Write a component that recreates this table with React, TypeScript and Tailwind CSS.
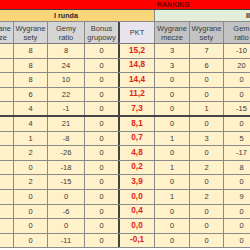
import React from "react";

const W = ["w-[35px]", "w-[34px]", "w-[37px]", "w-[35px]", "w-[35px]", "w-[35px]", "w-[34px]", "w-[36px]"];

const rows: (string | number)[][] = [
  ["", 8, 8, 0, "15,2", 3, 7, -10],
  ["", 8, 24, 0, "14,8", 3, 6, 20],
  ["", 8, 10, 0, "14,4", 0, 0, 0],
  ["", 6, 22, 0, "11,2", 0, 0, 0],
  ["", 4, -1, 0, "7,3", 0, 1, -15],
  ["", 4, 21, 0, "8,1", 0, 0, 0],
  ["", 1, -8, 0, "0,7", 1, 3, 5],
  ["", 2, -26, 0, "4,8", 0, 0, -17],
  ["", 0, -18, 0, "0,2", 1, 2, 8],
  ["", 2, -15, 0, "3,9", 0, 0, 0],
  ["", 0, 0, 0, "0,0", 1, 2, 9],
  ["", 0, -6, 0, "0,4", 0, 0, 0],
  ["", 0, 0, 0, "0,0", 0, 0, 0],
  ["", 0, -11, 0, "-0,1", 0, 0, 0],
];

const headers = [
  ["Wygrane", "mecze"],
  ["Wygrane", "sety"],
  ["Gemy", "ratio"],
  ["Bonus", "grupowy"],
  ["PKT"],
  ["Wygrane", "mecze"],
  ["Wygrane", "sety"],
  ["Gem", "ratio"],
];

const headerBg = [
  "bg-[#d5d5d5]",
  "bg-[#d5d5d5]",
  "bg-[#d5d5d5]",
  "bg-[#d5d5d5]",
  "bg-[#e7e4ee]",
  "bg-[#c3c3c3]",
  "bg-[#c3c3c3]",
  "bg-[#c3c3c3]",
];

function rBorder(i: number) {
  return i === 3 ? "border-r-2 border-r-[#454545]" : "border-r border-r-[#8a8a8a]";
}

export default function App() {
  return (
    <div className="w-[250px] h-[250px] overflow-hidden bg-white font-['Liberation_Sans',Arial,sans-serif] text-[#333]">
      <div className="ml-[-21px] w-[281px]">
        {/* red band */}
        <div className="h-[10px] bg-[#ff0000] border-b border-b-[#3a3a3a] flex items-center pl-[178px]">
          <span className="text-[7px] font-bold leading-none text-[#6a0000]">RANKING</span>
        </div>
        {/* round row */}
        <div className="flex h-[12px] border-b border-b-[#8a8a8a]">
          <div className="w-[176px] bg-[#f9d67a] border-r border-r-[#8a8a8a] flex items-center pl-[75px]">
            <span className="text-[7.2px] font-bold leading-none text-[#2a2a2a]">I runda</span>
          </div>
          <div className="w-[105px] bg-[#e3eedb] flex items-center pl-[91px] overflow-hidden whitespace-nowrap">
            <span className="text-[7.2px] font-bold leading-none text-[#2a2a2a]">II runda</span>
          </div>
        </div>
        {/* header row */}
        <div className="flex h-[22px] border-b border-b-[#7a7a7a]">
          {headers.map((h, i) => (
            <div
              key={i}
              className={`${W[i]} ${headerBg[i]} ${rBorder(i)} flex flex-col items-center justify-center text-[7.5px] leading-[9px] text-[#3a3a3a] whitespace-nowrap overflow-visible`}
            >
              {h.map((t, j) => (
                <span key={j}>{t}</span>
              ))}
            </div>
          ))}
        </div>
        {/* data rows */}
        {rows.map((r, ri) => (
          <div
            key={ri}
            className={`flex h-[14.6px] bg-[#fff1c9] ${ri === 4 ? "border-b-2 border-b-[#454545]" : "border-b border-b-[#8a8a8a]"}`}
          >
            {r.map((v, i) => (
              <div
                key={i}
                className={`${W[i]} ${rBorder(i)} flex items-center justify-center leading-none ${
                  i === 4 ? "text-[8.2px] font-bold text-[#e0231c]" : "text-[7.5px] text-[#3a3a3a]"
                }`}
              >
                {v}
              </div>
            ))}
          </div>
        ))}
      </div>
    </div>
  );
}
